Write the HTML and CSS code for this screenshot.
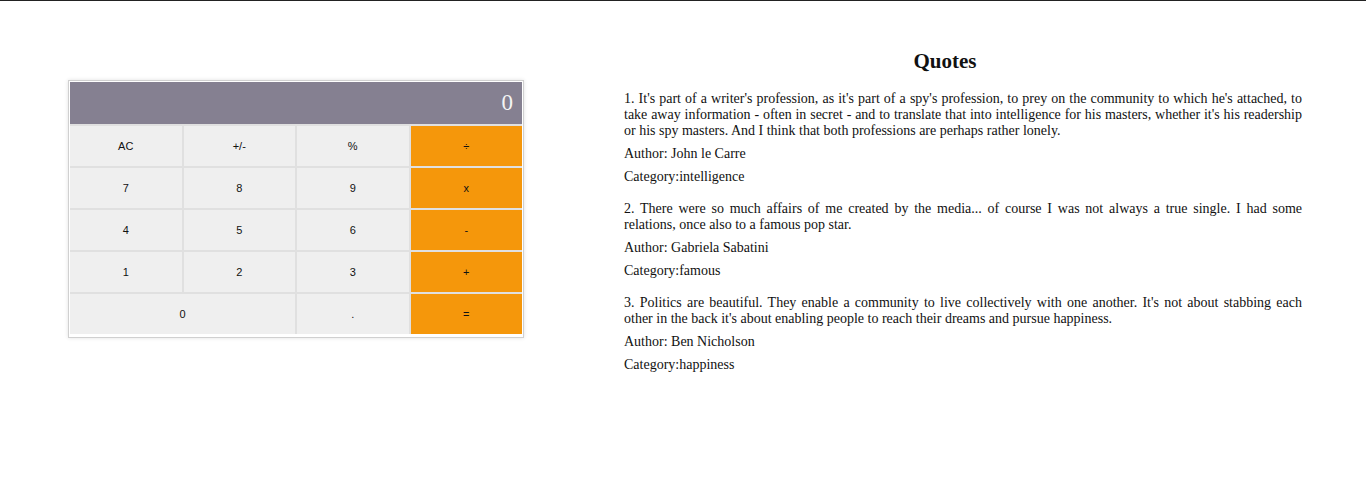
FILE: index.html
```html
<!DOCTYPE html>
<html>
<head>
<meta charset="utf-8">
<title>Calculator and Quotes</title>
<link rel="stylesheet" href="styles.css">
</head>
<body>
<div class="page">
  <div class="left">
    <div class="calc">
      <div class="display">0</div>
      <div class="keys">
        <button class="key">AC</button>
        <button class="key">+/-</button>
        <button class="key">%</button>
        <button class="key op">÷</button>
        <button class="key">7</button>
        <button class="key">8</button>
        <button class="key">9</button>
        <button class="key op">x</button>
        <button class="key">4</button>
        <button class="key">5</button>
        <button class="key">6</button>
        <button class="key op">-</button>
        <button class="key">1</button>
        <button class="key">2</button>
        <button class="key">3</button>
        <button class="key op">+</button>
        <button class="key zero">0</button>
        <button class="key">.</button>
        <button class="key op">=</button>
      </div>
    </div>
  </div>
  <div class="right">
    <h2 class="title">Quotes</h2>
    <div class="quotes">
      <div class="quote">
        <p class="text">1. It's part of a writer's profession, as it's part of a spy's profession, to prey on the community to which he's attached, to take away information - often in secret - and to translate that into intelligence for his masters, whether it's his readership or his spy masters. And I think that both professions are perhaps rather lonely.</p>
        <p class="meta">Author: John le Carre</p>
        <p class="meta">Category:intelligence</p>
      </div>
      <div class="quote">
        <p class="text">2. There were so much affairs of me created by the media... of course I was not always a true single. I had some relations, once also to a famous pop star.</p>
        <p class="meta">Author: Gabriela Sabatini</p>
        <p class="meta">Category:famous</p>
      </div>
      <div class="quote">
        <p class="text">3. Politics are beautiful. They enable a community to live collectively with one another. It's not about stabbing each other in the back it's about enabling people to reach their dreams and pursue happiness.</p>
        <p class="meta">Author: Ben Nicholson</p>
        <p class="meta">Category:happiness</p>
      </div>
    </div>
  </div>
</div>
</body>
</html>
```
FILE: styles.css
```css
html, body {
  margin: 0;
  padding: 0;
  background: #fff;
}
body {
  border-top: 1px solid #222;
  font-family: "Liberation Serif", "Times New Roman", serif;
  font-size: 14px;
  color: #111;
}
.page {
  display: flex;
  align-items: flex-start;
}
.left {
  width: 456px;
  padding: 79px 0 0 68px;
  flex: none;
}
.calc {
  width: 452px;
  border: 1px solid #d0d0d0;
  padding: 1px 1px 3px 1px;
  background: #fff;
  box-shadow: 0 0 4px rgba(0, 0, 0, 0.12);
}
.display {
  height: 42px;
  background: #858091;
  color: #f4f4f4;
  font-family: "Liberation Serif", serif;
  font-size: 23px;
  line-height: 42px;
  text-align: right;
  padding-right: 9px;
  box-sizing: border-box;
}
.keys {
  display: grid;
  grid-template-columns: repeat(4, 1fr);
  grid-auto-rows: 40px;
  gap: 2px;
  padding-top: 2px;
  background: #e0e0e0;
}
.key {
  border: 0;
  margin: 0;
  padding: 0;
  background: #efefef;
  font-family: "Liberation Sans", Arial, sans-serif;
  font-size: 11px;
  color: #111;
}
.key.op {
  background: #f5970b;
}
.key.zero {
  grid-column: span 2;
}
.right {
  flex: 1;
  padding: 0 64px 0 100px;
}
.title {
  font-size: 21px;
  font-weight: bold;
  text-align: center;
  margin: 48px -64px 17px -100px;
}
.quote {
  margin-bottom: 16px;
}
.quote p {
  margin: 7px 0;
}
.text {
  text-align: justify;
}
```
